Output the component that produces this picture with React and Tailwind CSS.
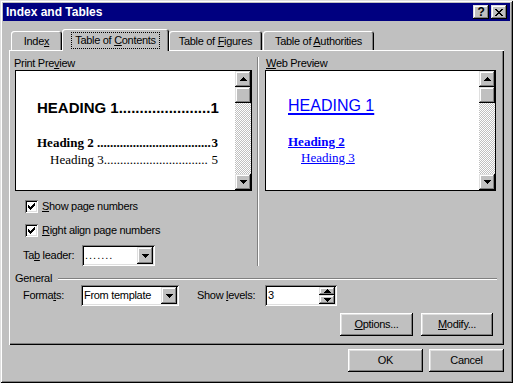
import React from "react";

const raised = "shadow-[inset_-1px_-1px_#000,inset_1px_1px_#fff,inset_-2px_-2px_#808080,inset_2px_2px_#dfdfdf]";
const raisedSb = "shadow-[inset_-1px_-1px_#000,inset_1px_1px_#dfdfdf,inset_-2px_-2px_#808080,inset_2px_2px_#fff]";
const sunken = "shadow-[inset_1px_1px_#808080,inset_-1px_-1px_#fff,inset_2px_2px_#000,inset_-2px_-2px_#dfdfdf]";
const dither = "bg-[repeating-conic-gradient(#c0c0c0_0%_25%,#ffffff_0%_50%)] bg-[length:2px_2px]";

const ArrowDown = () => (
  <svg width="7" height="4" viewBox="0 0 7 4" shapeRendering="crispEdges">
    <path d="M0 0h7v1H0zM1 1h5v1H1zM2 2h3v1H2zM3 3h1v1H3z" fill="#000" />
  </svg>
);

const ArrowUp = () => (
  <svg width="7" height="4" viewBox="0 0 7 4" shapeRendering="crispEdges">
    <path d="M3 0h1v1H3zM2 1h3v1H2zM1 2h5v1H1zM0 3h7v1H0z" fill="#000" />
  </svg>
);

const Scrollbar = () => (
  <div className="flex flex-col w-[16px] h-full">
    <div className={`h-[16px] bg-[#c0c0c0] ${raisedSb} flex items-center justify-center`}>
      <ArrowUp />
    </div>
    <div className={`h-[16px] bg-[#c0c0c0] ${raisedSb}`} />
    <div className={`flex-1 ${dither}`} />
    <div className={`h-[16px] bg-[#c0c0c0] ${raisedSb} flex items-center justify-center`}>
      <ArrowDown />
    </div>
  </div>
);

const Check = () => (
  <div className={`w-[13px] h-[13px] bg-white ${sunken} flex items-center justify-center`}>
    <svg width="7" height="7" viewBox="0 0 7 7" shapeRendering="crispEdges">
      <path d="M0 2h1v3H0zM1 3h1v3H1zM2 4h1v3H2zM3 3h1v3H3zM4 2h1v3H4zM5 1h1v3H5zM6 0h1v3H6z" fill="#000" />
    </svg>
  </div>
);

const Combo = ({ className, children }) => (
  <div className={`${className} h-[21px] bg-white ${sunken} flex items-center p-[2px]`}>
    <span className="flex-1 pl-[1px] whitespace-nowrap overflow-hidden">{children}</span>
    <div className={`w-[16px] h-[17px] bg-[#c0c0c0] ${raisedSb} flex items-center justify-center`}>
      <ArrowDown />
    </div>
  </div>
);

const Btn = ({ className, children }) => (
  <div className={`${className} h-[23px] bg-[#c0c0c0] ${raised} flex items-center justify-center`}>
    {children}
  </div>
);

const Tab = ({ className, children }) => (
  <div
    className={`${className} h-[19px] rounded-t-[3px] bg-[#c0c0c0] shadow-[inset_1px_1px_#fff,inset_-1px_0_#000,inset_-2px_0_#808080] flex items-center justify-center pt-[2px]`}
  >
    {children}
  </div>
);

export default function App() {
  return (
    <div
      className={`w-[513px] h-[383px] bg-[#c0c0c0] p-[3px] flex flex-col text-[11px] tracking-[-0.3px] text-black font-['Liberation_Sans',Arial,sans-serif] shadow-[inset_1px_1px_#dfdfdf,inset_-1px_-1px_#000,inset_2px_2px_#fff,inset_-2px_-2px_#808080]`}
    >
      {/* title bar */}
      <div className="h-[18px] bg-[#000080] flex items-center pl-[3px] pr-[3px]">
        <span className="flex-1 text-white font-bold text-[12px] tracking-normal">Index and Tables</span>
        <div className={`w-[16px] h-[14px] bg-[#c0c0c0] ${raisedSb} flex items-center justify-center font-bold text-[12px] leading-none pb-[1px]`}>
          ?
        </div>
        <div className={`ml-[2px] w-[16px] h-[14px] bg-[#c0c0c0] ${raisedSb} flex items-center justify-center`}>
          <svg width="8" height="7" viewBox="0 0 8 7" shapeRendering="crispEdges">
            <path
              d="M0 0h2v1H0zM6 0h2v1H6zM1 1h2v1H1zM5 1h2v1H5zM2 2h4v1H2zM3 3h2v1H3zM2 4h4v1H2zM1 5h2v1H1zM5 5h2v1H5zM0 6h2v1H0zM6 6h2v1H6z"
              fill="#000"
            />
          </svg>
        </div>
      </div>

      <div className="flex flex-col pl-[6px] pr-[6px]">
        {/* tabs */}
        <div className="mt-[8px] flex items-end h-[21px] pl-[2px]">
          <Tab className="w-[51px]">
            <span>
              Inde<u>x</u>
            </span>
          </Tab>
          <div className="relative z-10 -mb-[1px] w-[107px] h-[22px] rounded-t-[3px] bg-[#c0c0c0] shadow-[inset_1px_1px_#fff,inset_-1px_0_#000,inset_-2px_0_#808080] flex items-center justify-center">
            <span className="border border-dotted border-black px-[3px] h-[17px] leading-[15px]">
              Table of <u>C</u>ontents
            </span>
          </div>
          <Tab className="w-[93px]">
            <span>
              Table of <u>F</u>igures
            </span>
          </Tab>
          <Tab className="ml-[1px] w-[111px]">
            <span>
              Table of <u>A</u>uthorities
            </span>
          </Tab>
        </div>

        {/* tab panel */}
        <div className="h-[295px] bg-[#c0c0c0] shadow-[inset_1px_1px_#fff,inset_-1px_-1px_#000,inset_-2px_-2px_#808080] flex flex-col">
          <div className="flex">
            {/* print preview */}
            <div className="ml-[6px] w-[237px] flex flex-col">
              <div className="mt-[6px] h-[14px] leading-[14px] -ml-[1px]">
                Print Pre<u>v</u>iew
              </div>
              <div className="h-[121px] border border-black bg-white flex">
                <div className="flex-1 flex flex-col tracking-normal">
                  <div className="mt-[29px] ml-[21px] w-[179px] flex justify-between font-['Liberation_Sans',Arial,sans-serif] font-bold text-[15px] leading-[15px] whitespace-nowrap">
                    <span>HEADING 1......................</span>
                    <span>1</span>
                  </div>
                  <div className="mt-[21px] ml-[21px] w-[181px] flex justify-between font-['Liberation_Serif','Times_New_Roman',serif] font-bold text-[13px] leading-[13px] whitespace-nowrap">
                    <span>Heading 2 ...................................</span>
                    <span>3</span>
                  </div>
                  <div className="mt-[4px] ml-[34px] w-[168px] flex justify-between font-['Liberation_Serif','Times_New_Roman',serif] text-[13px] leading-[13px] whitespace-nowrap">
                    <span>Heading 3................................</span>
                    <span>5</span>
                  </div>
                </div>
                <Scrollbar />
              </div>

              <div className="mt-[9px] ml-[10px] h-[13px] flex items-center">
                <Check />
                <span className="ml-[4px]">
                  <u>S</u>how page numbers
                </span>
              </div>
              <div className="mt-[11px] ml-[10px] h-[13px] flex items-center">
                <Check />
                <span className="ml-[4px]">
                  <u>R</u>ight align page numbers
                </span>
              </div>
              <div className="mt-[8px] h-[21px] flex items-center">
                <span className="w-[67px] pl-[8px]">
                  Ta<u>b</u> leader:
                </span>
                <Combo className="w-[73px]">
                  <span className="tracking-[1px]">.......</span>
                </Combo>
              </div>
            </div>

            {/* separator */}
            <div className="ml-[5px] mt-[7px] w-[2px] shadow-[inset_1px_0_#808080,inset_-1px_0_#fff]" />

            {/* web preview */}
            <div className="ml-[6px] w-[231px] flex flex-col">
              <div className="mt-[6px] h-[14px] leading-[14px] pl-[1px]">
                <u>W</u>eb Preview
              </div>
              <div className="h-[121px] border border-black bg-white flex">
                <div className="flex-1 flex flex-col items-start tracking-normal text-[#0000ff]">
                  <span className="mt-[27px] ml-[22px] text-[16px] leading-[16px] underline decoration-[2px] underline-offset-[2px] font-['Liberation_Sans',Arial,sans-serif]">
                    HEADING 1
                  </span>
                  <span className="mt-[21px] ml-[22px] text-[13px] leading-[13px] font-bold underline font-['Liberation_Serif','Times_New_Roman',serif]">
                    Heading 2
                  </span>
                  <span className="mt-[3px] ml-[35px] text-[13px] leading-[13px] underline font-['Liberation_Serif','Times_New_Roman',serif]">
                    Heading 3
                  </span>
                </div>
                <Scrollbar />
              </div>
            </div>
          </div>

          {/* General */}
          <div className="mt-[6px] h-[13px] flex items-center pl-[6px] pr-[7px]">
            <span>General</span>
            <div className="ml-[6px] flex-1 h-[2px] border-t border-t-[#808080] border-b border-b-white" />
          </div>
          <div className="h-[21px] flex items-center">
            <span className="w-[72px] pl-[14px]">
              Forma<u>t</u>s:
            </span>
            <Combo className="w-[98px]">From template</Combo>
            <span className="ml-[18px] w-[68px]">
              Show <u>l</u>evels:
            </span>
            <div className={`w-[72px] h-[21px] bg-white ${sunken} flex items-center p-[2px]`}>
              <span className="flex-1 pl-[1px]">3</span>
              <div className="flex flex-col w-[16px] h-[17px]">
                <div className={`h-[8px] bg-[#c0c0c0] ${raisedSb} flex items-center justify-center`}>
                  <ArrowUp />
                </div>
                <div className={`h-[9px] bg-[#c0c0c0] ${raisedSb} flex items-center justify-center`}>
                  <ArrowDown />
                </div>
              </div>
            </div>
          </div>
          <div className="mt-[7px] flex">
            <Btn className="ml-[331px] w-[73px]">
              <span>
                <u>O</u>ptions...
              </span>
            </Btn>
            <Btn className="ml-[8px] w-[72px]">
              <span>
                <u>M</u>odify...
              </span>
            </Btn>
          </div>
        </div>

        {/* dialog buttons */}
        <div className="mt-[4px] flex justify-end gap-[6px]">
          <Btn className="w-[75px]">OK</Btn>
          <Btn className="w-[75px]">Cancel</Btn>
        </div>
      </div>
    </div>
  );
}
